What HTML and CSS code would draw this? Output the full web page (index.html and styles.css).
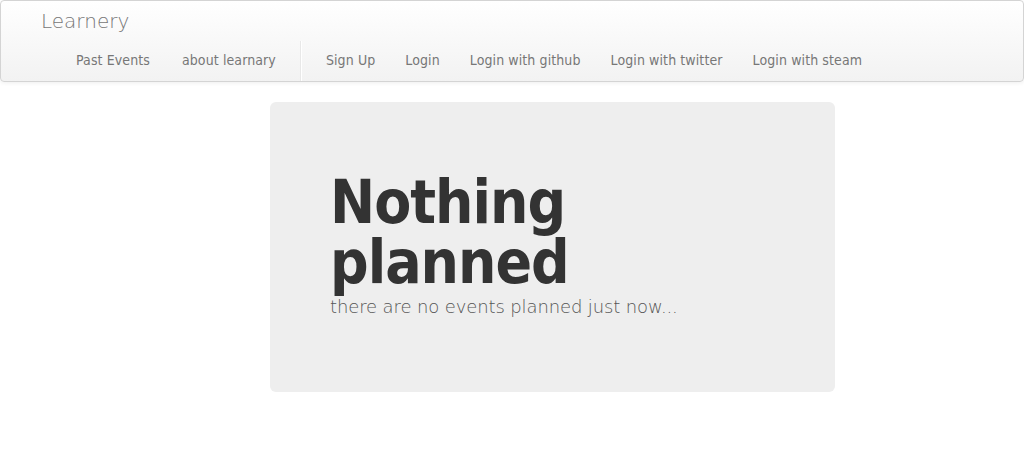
FILE: index.html
```html
<!DOCTYPE html>
<html>
<head>
<meta charset="utf-8">
<link rel="stylesheet" href="styles.css">
</head>
<body>
<div class="navbar">
  <div class="brand-row"><a class="brand">Learnery</a></div>
  <div class="nav-row">
    <ul class="nav">
      <li><a>Past Events</a></li>
      <li><a>about learnary</a></li>
    </ul>
    <div class="divider"></div>
    <ul class="nav">
      <li><a>Sign Up</a></li>
      <li><a>Login</a></li>
      <li><a>Login with github</a></li>
      <li><a>Login with twitter</a></li>
      <li><a>Login with steam</a></li>
    </ul>
  </div>
</div>
<div class="hero">
  <h1>Nothing<br>planned</h1>
  <p>there are no events planned just now...</p>
</div>
</body>
</html>
```
FILE: styles.css
```css
html, body { margin: 0; padding: 0; background: #fff; }
body { font-family: "DejaVu Sans", sans-serif; color: #333; }
.navbar {
  height: 80px;
  border: 1px solid #d4d4d4;
  border-radius: 4px;
  background: linear-gradient(#ffffff, #f2f2f2);
  box-shadow: 0 1px 4px rgba(0,0,0,0.065);
}
.brand-row { height: 40px; display: flex; align-items: center; }
.brand {
  margin-left: 40px;
  font-size: 20px;
  font-weight: 200;
  color: #777;
  margin-top: -1px;
}
.nav-row { display: flex; height: 40px; align-items: stretch; padding-left: 60px; }
.nav { list-style: none; margin: 0; padding: 0; display: flex; align-items: center; }
.nav li a {
  display: block;
  padding: 0 15px;
  font-family: "DejaVu Sans Condensed", "DejaVu Sans", sans-serif;
  font-stretch: condensed;
  font-size: 14px;
  letter-spacing: 0.1px;
  color: #777;
  margin-top: -2px;
}
.nav:first-child li:last-child a { padding-left: 17px; padding-right: 13px; }
.divider { width: 1px; background: #e8e8e8; border-right: 1px solid #fff; margin: 0 9px 0 11px; }
.hero {
  width: 505px;
  height: 220px;
  margin: 20px 0 0 270px;
  padding: 70px 0 0 60px;
  background: #eee;
  border-radius: 6px;
}
.hero h1 {
  margin: 0;
  font-family: "DejaVu Sans Condensed", "DejaVu Sans", sans-serif;
  font-stretch: condensed;
  font-size: 60px;
  font-weight: bold;
  line-height: 60px;
  letter-spacing: -1px;
  color: #333;
}
.hero p {
  margin: 1px 0 0;
  font-size: 18px;
  font-weight: 200;
  line-height: 27px;
  letter-spacing: -0.12px;
  color: #555;
}
```
